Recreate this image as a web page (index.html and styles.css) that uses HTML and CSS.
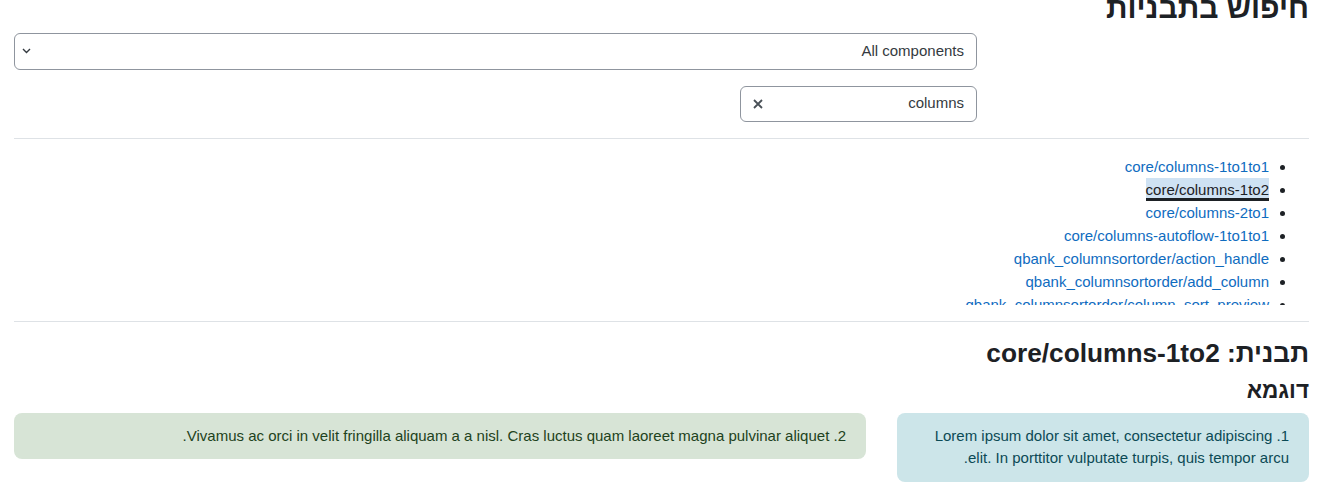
FILE: index.html
```html
<!DOCTYPE html>
<html lang="he" dir="rtl">
<head>
<meta charset="utf-8">
<title>חיפוש בתבניות</title>
<link rel="stylesheet" href="styles.css">
</head>
<body>
<main class="page">
  <h2 class="title">חיפוש בתבניות</h2>
  <form class="search-form">
    <div class="select">
      <span class="select-text">All components</span>
      <svg class="chevron" width="9" height="6" viewBox="0 0 9 6"><polyline points="1,1 4.5,4.5 8,1" fill="none" stroke="#343a40" stroke-width="1.4"/></svg>
    </div>
    <div class="search-input">
      <span class="search-text">columns</span>
      <svg class="clear" width="10" height="10" viewBox="0 0 10 10"><path d="M1 1 L9 9 M9 1 L1 9" stroke="#495057" stroke-width="1.8"/></svg>
    </div>
  </form>
  <hr class="rule">
  <div class="results">
    <ul class="result-list">
      <li><a href="#">core/columns-1to1to1</a></li>
      <li><a href="#" class="focused">core/columns-1to2</a></li>
      <li><a href="#">core/columns-2to1</a></li>
      <li><a href="#">core/columns-autoflow-1to1to1</a></li>
      <li><a href="#">qbank_columnsortorder/action_handle</a></li>
      <li><a href="#">qbank_columnsortorder/add_column</a></li>
      <li><a href="#">qbank_columnsortorder/column_sort_preview</a></li>
      <li><a href="#">qbank_columnsortorder/columnsortorder</a></li>
    </ul>
  </div>
  <hr class="rule">
  <h3 class="template-title">תבנית: core/columns-1to2</h3>
  <h4 class="example-title">דוגמא</h4>
  <div class="columns">
    <div class="box box-info">1. Lorem ipsum dolor sit amet, consectetur adipiscing elit. In porttitor vulputate turpis, quis tempor arcu.</div>
    <div class="box box-success">2. Vivamus ac orci in velit fringilla aliquam a a nisl. Cras luctus quam laoreet magna pulvinar aliquet.</div>
  </div>
</main>
</body>
</html>
```
FILE: styles.css
```css
html, body {
  margin: 0;
  padding: 0;
  background: #ffffff;
}
body {
  font-family: "Liberation Sans", Arial, sans-serif;
  font-size: 15px;
  line-height: 1.5;
  color: #1d2125;
}
.page {
  padding: 0 25px 0 14px;
}
.title {
  font-size: 30px;
  font-weight: 700;
  line-height: 36px;
  margin: -10px 0 7px 0;
}
.search-form {
  margin-left: 0;
  margin-right: 332px;
}
.select {
  display: flex;
  justify-content: space-between;
  align-items: center;
  height: 36.5px;
  box-sizing: border-box;
  border: 1px solid #8f959e;
  border-radius: 6px;
  padding: 0 12px 0 7px;
  margin-bottom: 16px;
}
.select-text {
  color: #343a40;
}
.chevron {
  display: block;
}
.search-input {
  display: flex;
  justify-content: space-between;
  align-items: center;
  width: 237px;
  height: 36px;
  box-sizing: border-box;
  border: 1px solid #8f959e;
  border-radius: 6px;
  padding: 0 12px 0 12px;
  margin-bottom: 16px;
}
.search-text {
  color: #343a40;
}
.clear {
  display: block;
}
.rule {
  border: 0;
  border-top: 1px solid #dee2e6;
  margin: 0 0 16px 0;
  height: 0;
}
.results {
  height: 150px;
  overflow: hidden;
  margin-bottom: 16px;
}
.result-list {
  margin: 0;
  padding: 0 40px 0 0;
}
.result-list li {
  line-height: 23px;
}
.result-list a {
  color: #0f6cbf;
  text-decoration: none;
}
.result-list a.focused {
  display: inline-block;
  color: #1d2125;
  background: #cfe2f3;
  box-shadow: inset 0 -3px #1d2125;
  line-height: 23px;
  vertical-align: top;
}
.template-title {
  font-size: 26.25px;
  font-weight: 700;
  line-height: 31.5px;
  margin: 15px 0 8px 0;
}
.example-title {
  font-size: 22.5px;
  font-weight: 700;
  line-height: 27px;
  margin: 0 0 8.5px 0;
}
.columns {
  display: grid;
  grid-template-columns: 412px 1fr;
  column-gap: 31px;
  align-items: start;
}
.box {
  padding: 12px 20px;
  border-radius: 8px;
  line-height: 22.5px;
}
.box-info {
  background: #cce5e9;
  color: #0b4a55;
}
.box-success {
  background: #d7e4d6;
  color: #1e4220;
}
```
